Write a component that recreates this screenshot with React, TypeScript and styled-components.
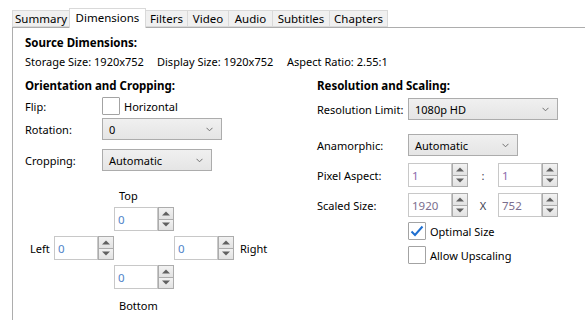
import React from "react";
import styled, { createGlobalStyle } from "styled-components";

const GlobalStyle = createGlobalStyle`
  html, body {
    margin: 0;
    padding: 0;
    background: #ffffff;
  }
  body {
    font-family: "Noto Sans", "Open Sans", sans-serif;
    font-size: 11px;
    color: #000;
    overflow: hidden;
  }
`

const Page = styled.div`
  width: 585px;
  height: 320px;
  padding: 8px 0 0 12px;
  box-sizing: border-box;
  display: flex;
  flex-direction: column;
`

const TabStrip = styled.div`
  display: flex;
  align-items: flex-end;
  height: 19px;
  padding-left: 1px;
  position: relative;
  z-index: 1;
`

interface TabProps {
  $width: number
  $active?: boolean
}

const Tab = styled.div<TabProps>`
  box-sizing: border-box;
  width: ${({ $width }) => $width}px;
  height: ${({ $active }) => ($active ? "20px" : "17px")};
  margin-bottom: ${({ $active }) => ($active ? "-1px" : "0")};
  margin-left: -1px;
  display: flex;
  align-items: center;
  justify-content: center;
  padding-bottom: ${({ $active }) => ($active ? "3px" : "0")};
  border: 1px solid #d9d9d9;
  border-bottom: ${({ $active }) => ($active ? "none" : "1px solid #d9d9d9")};
  background: ${({ $active }) => ($active ? "#ffffff" : "#f0f0f0")};
  position: relative;
  z-index: ${({ $active }) => ($active ? 2 : 1)};
  white-space: nowrap;
  font-size: 11.5px;
`

const Panel = styled.div`
  flex: 1;
  border-top: 1px solid #adadad;
  border-left: 1px solid #adadad;
  padding: 7px 0 0 12px;
`

const Heading = styled.div`
  font-weight: bold;
  font-size: 11.5px;
  line-height: 16px;
`

const InfoLine = styled.div`
  display: grid;
  grid-template-columns: 132px 130px auto;
  line-height: 16px;
  margin-top: 3px;
  white-space: nowrap;
`

const Columns = styled.div`
  display: grid;
  grid-template-columns: 292px 1fr;
  margin-top: 8px;
`

const Column = styled.div`
  display: flex;
  flex-direction: column;
`

interface RowProps {
  $top: number
  $label?: number
}

const FormRow = styled.div<RowProps>`
  display: grid;
  grid-template-columns: ${({ $label }) => $label ?? 77}px auto;
  align-items: center;
  margin-top: ${({ $top }) => $top}px;
  white-space: nowrap;
`

const Inline = styled.div`
  display: flex;
  align-items: center;
`

interface ComboProps {
  $width: number
}

const Combo = styled.div<ComboProps>`
  box-sizing: border-box;
  width: ${({ $width }) => $width}px;
  height: 22px;
  border: 1px solid #acacac;
  background: linear-gradient(#f0f0f0, #e5e5e5);
  display: flex;
  align-items: center;
  justify-content: space-between;
  padding: 0 8px 0 6px;
`

const Chevron = () => (
  <svg width="7" height="5" viewBox="0 0 7 5">
    <path d="M0.5 0.8 L3.5 3.8 L6.5 0.8" fill="none" stroke="#707070" strokeWidth="1" />
  </svg>
)

const CheckBox = styled.div`
  box-sizing: border-box;
  width: 18px;
  height: 18px;
  border: 1px solid #a3a3a3;
  border-radius: 1px;
  background: #fff;
  display: flex;
  align-items: center;
  justify-content: center;
  margin-right: 4px;
`

const Spin = styled.div`
  display: flex;
  width: 60px;
  height: 24px;
`

const SpinBox = styled.div<{ $tone: string }>`
  box-sizing: border-box;
  width: 44px;
  height: 24px;
  border: 1px solid #c8c8c8;
  background: #fff;
  color: ${({ $tone }) => $tone};
  font-size: 11.5px;
  display: flex;
  align-items: center;
  padding-left: 3px;
`

const SpinButtons = styled.div`
  box-sizing: border-box;
  width: 16px;
  height: 24px;
  display: flex;
  flex-direction: column;
`

const SpinHalf = styled.div`
  box-sizing: border-box;
  flex: 1;
  border: 1px solid #acacac;
  background: linear-gradient(#f2f2f2, #e2e2e2);
  display: flex;
  align-items: center;
  justify-content: center;

  & + & { border-top: none; }
`

const Arrow = ({ down }: { down?: boolean }) => (
  <svg width="8" height="5" viewBox="0 0 8 5">
    <path d={down ? "M0 0.5 H8 L4 4.5 Z" : "M0 4.5 H8 L4 0.5 Z"} fill="#606060" />
  </svg>
)

function Spinner({ value, tone = "#4f84c9" }: { value: string; tone?: string }) {
  return (
    <Spin>
      <SpinBox $tone={tone}>{value}</SpinBox>
      <SpinButtons>
        <SpinHalf><Arrow /></SpinHalf>
        <SpinHalf><Arrow down /></SpinHalf>
      </SpinButtons>
    </Spin>
  )
}

const Cross = styled.div`
  display: flex;
  flex-direction: column;
  margin-top: 17px;
`

const CrossCenter = styled.div`
  padding-left: 89px;
`

const CrossLabel = styled.div<{ $top?: number; $bottom?: number }>`
  padding-left: 94px;
  line-height: 16px;
  margin-top: ${({ $top }) => $top ?? 0}px;
  margin-bottom: ${({ $bottom }) => $bottom ?? 0}px;
`

const CrossMiddle = styled.div`
  display: flex;
  align-items: center;
  margin: 5px 0;
  padding-left: 5px;
`

const SideLabel = styled.span<{ $width: number }>`
  width: ${({ $width }) => $width}px;
`

const Gap = styled.div<{ $width: number }>`
  width: ${({ $width }) => $width}px;
`

const Separator = styled.span`
  width: 30px;
  text-align: center;
  color: #404050;
`

const Check = () => (
  <svg width="14" height="12" viewBox="0 0 14 12">
    <path d="M1.5 6.5 L5 10 L12.5 1.5" fill="none" stroke="#1e6fd0" strokeWidth="2" />
  </svg>
)

const tabs = [
  { name: "Summary", width: 58 },
  { name: "Dimensions", width: 77 },
  { name: "Filters", width: 43 },
  { name: "Video", width: 42 },
  { name: "Audio", width: 45 },
  { name: "Subtitles", width: 58 },
  { name: "Chapters", width: 59 },
]

export default function App() {
  return (
    <>
      <GlobalStyle />
      <Page>
        <TabStrip>
          {tabs.map((t) => (
            <Tab key={t.name} $width={t.width} $active={t.name === "Dimensions"}>
              {t.name}
            </Tab>
          ))}
        </TabStrip>
        <Panel>
          <Heading>Source Dimensions:</Heading>
          <InfoLine>
            <span>Storage Size: 1920x752</span>
            <span>Display Size: 1920x752</span>
            <span>Aspect Ratio: 2.55:1</span>
          </InfoLine>
          <Columns>
            <Column>
              <Heading>Orientation and Cropping:</Heading>
              <FormRow $top={3}>
                <span>Flip:</span>
                <Inline>
                  <CheckBox />
                  Horizontal
                </Inline>
              </FormRow>
              <FormRow $top={3}>
                <span>Rotation:</span>
                <Combo $width={120}>0<Chevron /></Combo>
              </FormRow>
              <FormRow $top={9}>
                <span>Cropping:</span>
                <Combo $width={110}>Automatic<Chevron /></Combo>
              </FormRow>
              <Cross>
                <CrossLabel $bottom={3}>Top</CrossLabel>
                <CrossCenter><Spinner value="0" /></CrossCenter>
                <CrossMiddle>
                  <SideLabel $width={24}>Left</SideLabel>
                  <Spinner value="0" />
                  <Gap $width={60} />
                  <Spinner value="0" />
                  <Gap $width={6} />
                  Right
                </CrossMiddle>
                <CrossCenter><Spinner value="0" /></CrossCenter>
                <CrossLabel $top={9}>Bottom</CrossLabel>
              </Cross>
            </Column>
            <Column>
              <Heading>Resolution and Scaling:</Heading>
              <FormRow $top={4} $label={91}>
                <span>Resolution Limit:</span>
                <Combo $width={150}>1080p HD<Chevron /></Combo>
              </FormRow>
              <FormRow $top={14} $label={91}>
                <span>Anamorphic:</span>
                <Combo $width={110}>Automatic<Chevron /></Combo>
              </FormRow>
              <FormRow $top={7} $label={91}>
                <span>Pixel Aspect:</span>
                <Inline>
                  <Spinner value="1" tone="#8a6aac" />
                  <Separator>:</Separator>
                  <Spinner value="1" tone="#8a6aac" />
                </Inline>
              </FormRow>
              <FormRow $top={6} $label={91}>
                <span>Scaled Size:</span>
                <Inline>
                  <Spinner value="1920" tone="#7a6e8e" />
                  <Separator>X</Separator>
                  <Spinner value="752" tone="#7a6e8e" />
                </Inline>
              </FormRow>
              <FormRow $top={5} $label={91}>
                <span />
                <Inline>
                  <CheckBox><Check /></CheckBox>
                  Optimal Size
                </Inline>
              </FormRow>
              <FormRow $top={6} $label={91}>
                <span />
                <Inline>
                  <CheckBox />
                  Allow Upscaling
                </Inline>
              </FormRow>
            </Column>
          </Columns>
        </Panel>
      </Page>
    </>
  )
}
